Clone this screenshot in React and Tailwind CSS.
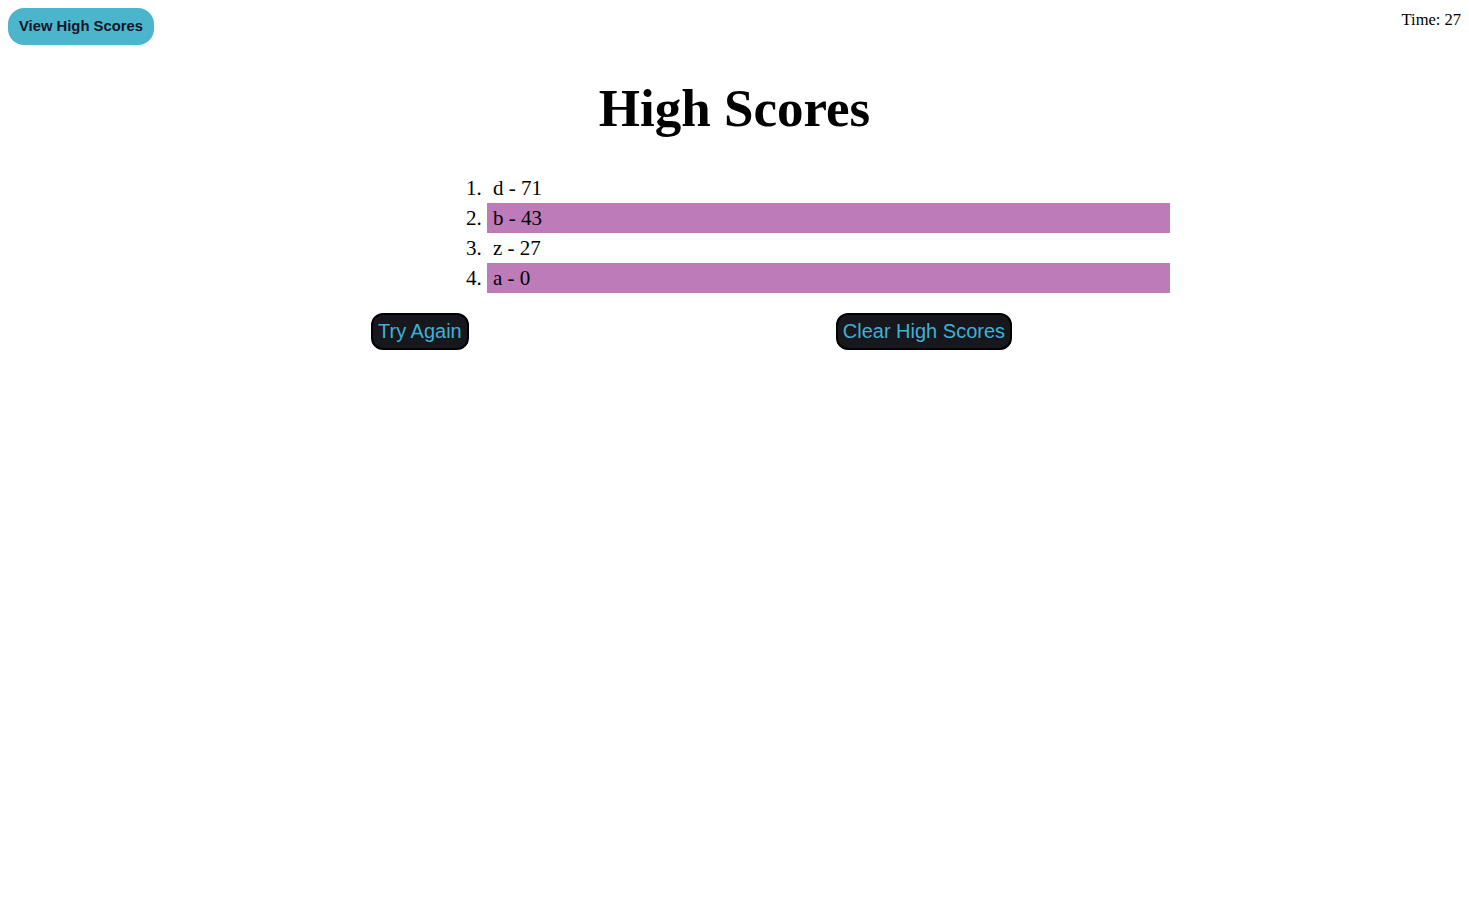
export default function App() {
  const scores = [
    { n: "d", s: 71 },
    { n: "b", s: 43 },
    { n: "z", s: 27 },
    { n: "a", s: 0 },
  ];
  return (
    <div className="min-h-[912px] w-full bg-white text-black">
      <div className="flex justify-between items-start pl-2 pr-2 pt-2">
        <button className="h-[37px] px-[11px] rounded-[16px] bg-[#4ab5cb] text-[#15152a] font-bold text-[14.8px] font-['Liberation_Sans',Arial,sans-serif]">
          View High Scores
        </button>
        <div className="font-['Liberation_Serif','Times_New_Roman',serif] text-[16.5px] leading-[20px] pt-[2px]">
          Time: 27
        </div>
      </div>
      <h1 className="mt-[33px] text-center font-bold text-[53px] leading-[60px] font-['Liberation_Serif','Times_New_Roman',serif]">
        High Scores
      </h1>
      <ol className="mt-[35px] ml-[447px] w-[723px] list-decimal pl-10 font-['Liberation_Serif','Times_New_Roman',serif] text-[21px]">
        {scores.map((r, i) => (
          <li
            key={i}
            className={`h-[30px] leading-[30px] pl-[6px] ${i % 2 === 1 ? "bg-[#be7bba]" : ""}`}
          >
            {r.n} - {r.s}
          </li>
        ))}
      </ol>
      <div className="mt-[20px] flex pl-[371px] gap-[367px] font-['Liberation_Sans',Arial,sans-serif]">
        <button className="border-2 border-black rounded-[12px] bg-[#17181d] text-[#3fb1d3] text-[20px] leading-[23px] px-[5px] py-[5px]">
          Try Again
        </button>
        <button className="border-2 border-black rounded-[12px] bg-[#17181d] text-[#3fb1d3] text-[20px] leading-[23px] px-[5px] py-[5px]">
          Clear High Scores
        </button>
      </div>
    </div>
  );
}
